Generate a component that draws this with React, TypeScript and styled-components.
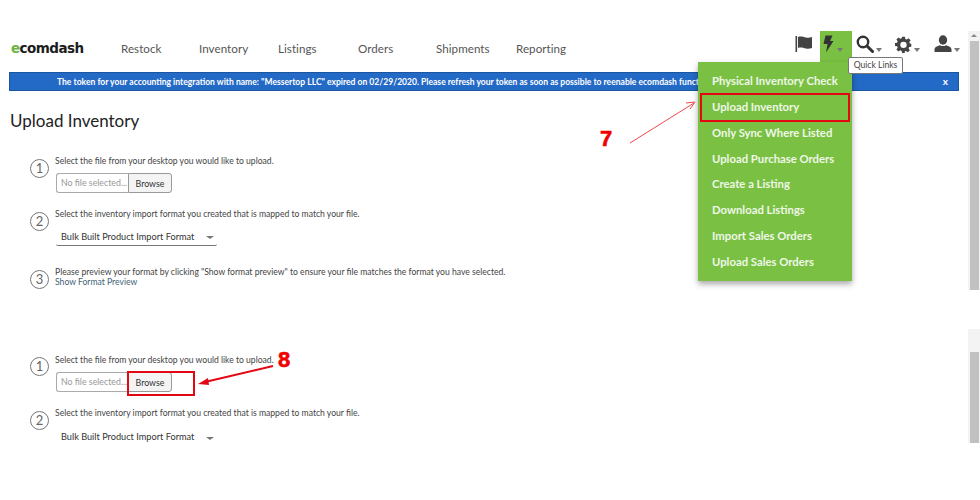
import React from "react";
import styled, { createGlobalStyle } from "styled-components";

const Global = createGlobalStyle`
  html, body { margin: 0; padding: 0; background: #fff; }
  body { font-family: "Lato", "Liberation Sans", sans-serif; overflow: hidden; }
`;

const Page = styled.div`
  position: relative;
  width: 980px;
  height: 500px;
  overflow: hidden;
  background: #fff;
  color: #333;
`;

const Header = styled.header`
  display: flex;
  align-items: center;
  height: 31px;
  margin-top: 31px;
  padding-left: 11px;
  width: 970px;
  box-sizing: border-box;
`;

const Logo = styled.div`
  width: 110px;
  margin-top: 3px;
  font: 700 13.5px/20px "DejaVu Sans", sans-serif;
  letter-spacing: -0.55px;
  color: #1c1c1c;
  span { color: #6db33f; }
`;

const NavLink = styled.a<{ $w: number }>`
  width: ${(p) => p.$w}px;
  margin-top: 3px;
  font-size: 11.6px;
  letter-spacing: 0.05px;
  color: #555;
`;

const IconBar = styled.div`
  margin-left: auto;
  display: flex;
  align-items: center;
  height: 31px;
`;

const IconCell = styled.div<{ $active?: boolean; $w: number; $pl: number }>`
  display: flex;
  align-items: center;
  box-sizing: border-box;
  width: ${(p) => p.$w}px;
  height: 31px;
  padding: 0 0 5px ${(p) => p.$pl}px;
  gap: 2px;
  background: ${(p) => (p.$active ? "#7ac143" : "transparent")};
`;

const Caret = styled.i`
  align-self: flex-end;
  margin-bottom: 5px;
  width: 0;
  height: 0;
  border-left: 3.5px solid transparent;
  border-right: 3.5px solid transparent;
  border-top: 4px solid #777;
`;

const Banner = styled.div`
  display: flex;
  align-items: center;
  position: relative;
  width: 950px;
  height: 19px;
  margin: 10px 0 0 9px;
  padding-left: 47px;
  background: #2369c6;
  border: 1px solid #1b559f;
  box-sizing: border-box;
  color: #fff;
  font: 700 8.55px "Lato", sans-serif;
  white-space: nowrap;
`;

const BannerText = styled.span`
  display: block;
  width: 641px;
  overflow: hidden;
`;

const BannerClose = styled.span`
  position: absolute;
  right: 10px;
  top: 2px;
  font-size: 10px;
`;

const Title = styled.h1`
  margin: 18px 0 0 10px;
  font-size: 17px;
  line-height: 24px;
  font-weight: 400;
  color: #222;
`;

const Section = styled.section<{ $mt: number }>`
  display: flex;
  flex-direction: column;
  margin: ${(p) => p.$mt}px 0 0 30px;
`;

const Step = styled.div<{ $mb: number }>`
  display: flex;
  gap: 6px;
  margin-bottom: ${(p) => p.$mb}px;
`;

const Num = styled.div<{ $top?: number }>`
  flex: none;
  box-sizing: border-box;
  width: 19px;
  height: 19px;
  margin-top: ${(p) => p.$top ?? 4}px;
  border: 1.2px solid #777;
  border-radius: 50%;
  font-size: 13px;
  line-height: 16px;
  text-align: center;
  color: #666;
`;

const StepBody = styled.div`
  display: flex;
  flex-direction: column;
  padding-top: 1px;
  font-size: 8.6px;
  line-height: 11px;
  color: #444;
  white-space: nowrap;
`;

const FileRow = styled.div`
  display: flex;
  height: 20px;
  margin: 6px 0 0 1px;
  width: 116px;
`;

const FileText = styled.div`
  width: 72px;
  box-sizing: border-box;
  border: 1px solid #aaa;
  border-right: 0;
  border-radius: 3px 0 0 3px;
  padding-left: 4px;
  line-height: 18px;
  font-size: 8.8px;
  color: #999;
  white-space: nowrap;
  overflow: hidden;
`;

const Browse = styled.button`
  width: 44px;
  padding: 0;
  border: 1px solid #999;
  border-radius: 0 3px 3px 0;
  background: #f4f4f4;
  font: 8.8px "Lato", sans-serif;
  color: #333;
`;

const Select = styled.div<{ $line?: boolean }>`
  display: flex;
  align-items: center;
  justify-content: space-between;
  box-sizing: border-box;
  width: 161px;
  height: 19px;
  margin: ${(p) => (p.$line ? 7 : 8)}px 0 0 1px;
  padding: 0 3px 0 5px;
  font-size: 9.2px;
  color: #333;
  border-bottom: ${(p) => (p.$line ? "1px solid #777" : "0")};
  border-radius: 2px;
`;

const SelectCaret = styled.i`
  margin-top: 3px;
  border-left: 4px solid transparent;
  border-right: 4px solid transparent;
  border-top: 3px solid #777;
`;

const PreviewLink = styled.a`
  margin-top: -1px;
  color: #3f5f77;
`;

const Menu = styled.nav`
  position: absolute;
  left: 698px;
  top: 62px;
  width: 154px;
  height: 219px;
  background: #7ac143;
  box-shadow: 0 3px 6px rgba(0, 0, 0, 0.35);
  padding-top: 6px;
  box-sizing: border-box;
`;

const MenuItem = styled.a`
  display: block;
  box-sizing: border-box;
  height: 25.85px;
  line-height: 26px;
  padding-left: 14px;
  font-size: 11.3px;
  font-weight: 700;
  color: #eff7e8;
  white-space: nowrap;
`;

const Tooltip = styled.div`
  position: absolute;
  left: 848px;
  top: 57px;
  width: 55px;
  height: 17px;
  box-sizing: border-box;
  background: #fff;
  border: 1px solid #777;
  border-radius: 2px;
  font-size: 8.6px;
  line-height: 15px;
  text-align: center;
  color: #444;
`;

const Highlight = styled.div<{ $x: number; $y: number; $w: number; $h: number }>`
  position: absolute;
  left: ${(p) => p.$x}px;
  top: ${(p) => p.$y}px;
  width: ${(p) => p.$w}px;
  height: ${(p) => p.$h}px;
  box-sizing: border-box;
  border: 2px solid #e30613;
`;

const Mark = styled.div<{ $x: number; $y: number }>`
  position: absolute;
  left: ${(p) => p.$x}px;
  top: ${(p) => p.$y}px;
  font: 700 22px/22px "Liberation Sans", sans-serif;
  -webkit-text-stroke: 0.6px #f00000;
  color: #f00000;
`;

const Overlay = styled.svg`
  position: absolute;
  left: 0;
  top: 0;
  pointer-events: none;
`;

const Track = styled.div<{ $y: number; $h: number; $pt: number }>`
  position: absolute;
  left: 968px;
  top: ${(p) => p.$y}px;
  box-sizing: border-box;
  width: 12px;
  height: ${(p) => p.$h}px;
  padding: ${(p) => p.$pt}px 1px 0 2px;
  background: #f3f3f3;
`;

const Thumb = styled.div`
  height: 100%;
  background: #c1c1c1;
`;

const ArrowUp = styled.i`
  position: absolute;
  left: 3px;
  top: 3px;
  border-left: 3px solid transparent;
  border-right: 3px solid transparent;
  border-bottom: 3px solid #888;
`;

const Flag = () => (
  <svg width="20" height="18" viewBox="0 0 20 18">
    <rect x="0.5" y="1" width="1.6" height="16" fill="#444" />
    <path d="M3 2c3-1 5 0 8 0.6 2 .4 4 .2 6-.6v11c-2 .8-4 1-6 .6-3-.6-5-1.6-8-.6z" fill="#444" />
  </svg>
);
const Bolt = () => (
  <svg width="13" height="18" viewBox="0 0 12 18">
    <path d="M3 0.5h7L7.6 6H11L3.500 17.500 5 9H1z" fill="#333" />
  </svg>
);
const Search = () => (
  <svg width="18" height="18" viewBox="0 0 18 18">
    <circle cx="7" cy="7" r="5.200" fill="none" stroke="#333" strokeWidth="2.400" />
    <path d="M11 11l5.500 5.500" stroke="#333" strokeWidth="3" strokeLinecap="round" />
  </svg>
);
const Gear = () => (
  <svg width="17" height="17" viewBox="0 0 24 24">
    <path
      fill="#444"
      fillRule="evenodd"
      d="M10 1h4l.6 3.200 1.900.8 2.700-1.800 2.800 2.800-1.800 2.700.8 1.900L23 11v4l-3 .6-.8 1.900 1.800 2.700-2.800 2.800-2.700-1.800-1.900.8L14 24h-4l-.6-3-1.900-.8-2.700 1.800L2 19.200l1.800-2.700-.8-1.900L0 14v-4l3-.6.8-1.900L2 4.800 4.800 2l2.700 1.800 1.900-.8zM12 8a4.500 4.500 0 100 9 4.500 4.500 0 000-9z"
    />
  </svg>
);
const User = () => (
  <svg width="18" height="18" viewBox="0 0 18 18">
    <ellipse cx="9" cy="5" rx="4.200" ry="4.700" fill="#444" />
    <path d="M0.500 17v-2.500c0-2.500 3-3.500 5.500-4.300 1.800 1.200 4.200 1.200 6 0 2.500.8 5.500 1.800 5.500 4.300V17z" fill="#444" />
  </svg>
);

const nav: [string, number][] = [
  ["Restock", 78],
  ["Inventory", 79],
  ["Listings", 80],
  ["Orders", 78],
  ["Shipments", 80],
  ["Reporting", 70],
];

const menu = [
  "Physical Inventory Check",
  "Upload Inventory",
  "Only Sync Where Listed",
  "Upload Purchase Orders",
  "Create a Listing",
  "Download Listings",
  "Import Sales Orders",
  "Upload Sales Orders",
];

export default function App() {
  return (
    <Page>
      <Global />
      <Header>
        <Logo>
          <span>e</span>comdash
        </Logo>
        {nav.map(([label, w]) => (
          <NavLink key={label} $w={w}>
            {label}
          </NavLink>
        ))}
        <IconBar>
          <IconCell $w={32} $pl={7}>
            <Flag />
          </IconCell>
          <IconCell $w={32} $pl={2} $active>
            <Bolt />
            <Caret />
          </IconCell>
          <IconCell $w={39} $pl={4}>
            <Search />
            <Caret />
          </IconCell>
          <IconCell $w={39} $pl={4}>
            <Gear />
            <Caret />
          </IconCell>
          <IconCell $w={40} $pl={4}>
            <User />
            <Caret />
          </IconCell>
        </IconBar>
      </Header>
      <Banner>
        <BannerText>
          The token for your accounting integration with name: "Messertop LLC" expired on 02/29/2020. Please refresh
          your token as soon as possible to reenable ecomdash functionality.
        </BannerText>
        <BannerClose>x</BannerClose>
      </Banner>
      <Title>Upload Inventory</Title>

      <Section $mt={22}>
        <Step $mb={15}>
          <Num>1</Num>
          <StepBody>
            Select the file from your desktop you would like to upload.
            <FileRow>
              <FileText>No file selected...</FileText>
              <Browse>Browse</Browse>
            </FileRow>
          </StepBody>
        </Step>
        <Step $mb={20}>
          <Num>2</Num>
          <StepBody>
            Select the inventory import format you created that is mapped to match your file.
            <Select $line>
              Bulk Built Product Import Format
              <SelectCaret />
            </Select>
          </StepBody>
        </Step>
        <Step $mb={0}>
          <Num>3</Num>
          <StepBody>
            Please preview your format by clicking "Show format preview" to ensure your file matches the format you have
            selected.
            <PreviewLink>Show Format Preview</PreviewLink>
          </StepBody>
        </Step>
      </Section>

      <Section $mt={65}>
        <Step $mb={15}>
          <Num $top={3}>1</Num>
          <StepBody>
            Select the file from your desktop you would like to upload.
            <FileRow>
              <FileText>No file selected...</FileText>
              <Browse>Browse</Browse>
            </FileRow>
          </StepBody>
        </Step>
        <Step $mb={0}>
          <Num>2</Num>
          <StepBody>
            Select the inventory import format you created that is mapped to match your file.
            <Select>
              Bulk Built Product Import Format
              <SelectCaret />
            </Select>
          </StepBody>
        </Step>
      </Section>

      <Menu>
        {menu.map((m) => (
          <MenuItem key={m}>{m}</MenuItem>
        ))}
      </Menu>
      <Tooltip>Quick Links</Tooltip>
      <Highlight $x={700} $y={93} $w={150} $h={29} />
      <Highlight $x={127} $y={371} $w={68} $h={25} />
      <Mark $x={600} $y={128}>7</Mark>
      <Mark $x={278} $y={349}>8</Mark>
      <Overlay width="980" height="500" viewBox="0 0 980 500">
        <path d="M630 143L694 103" stroke="#f0484c" strokeWidth="1" fill="none" />
        <path d="M695 102l-9 1M695 102l-5 7" stroke="#f0484c" strokeWidth="1" fill="none" />
        <path d="M273 366L205 382" stroke="#e30613" strokeWidth="2" fill="none" />
        <path d="M198 384l10-6 1 7z" fill="#e30613" />
      </Overlay>
      <Track $y={31} $h={259} $pt={10}>
        <ArrowUp />
        <Thumb />
      </Track>
      <Track $y={329} $h={114} $pt={23}>
        <Thumb />
      </Track>
    </Page>
  );
}
